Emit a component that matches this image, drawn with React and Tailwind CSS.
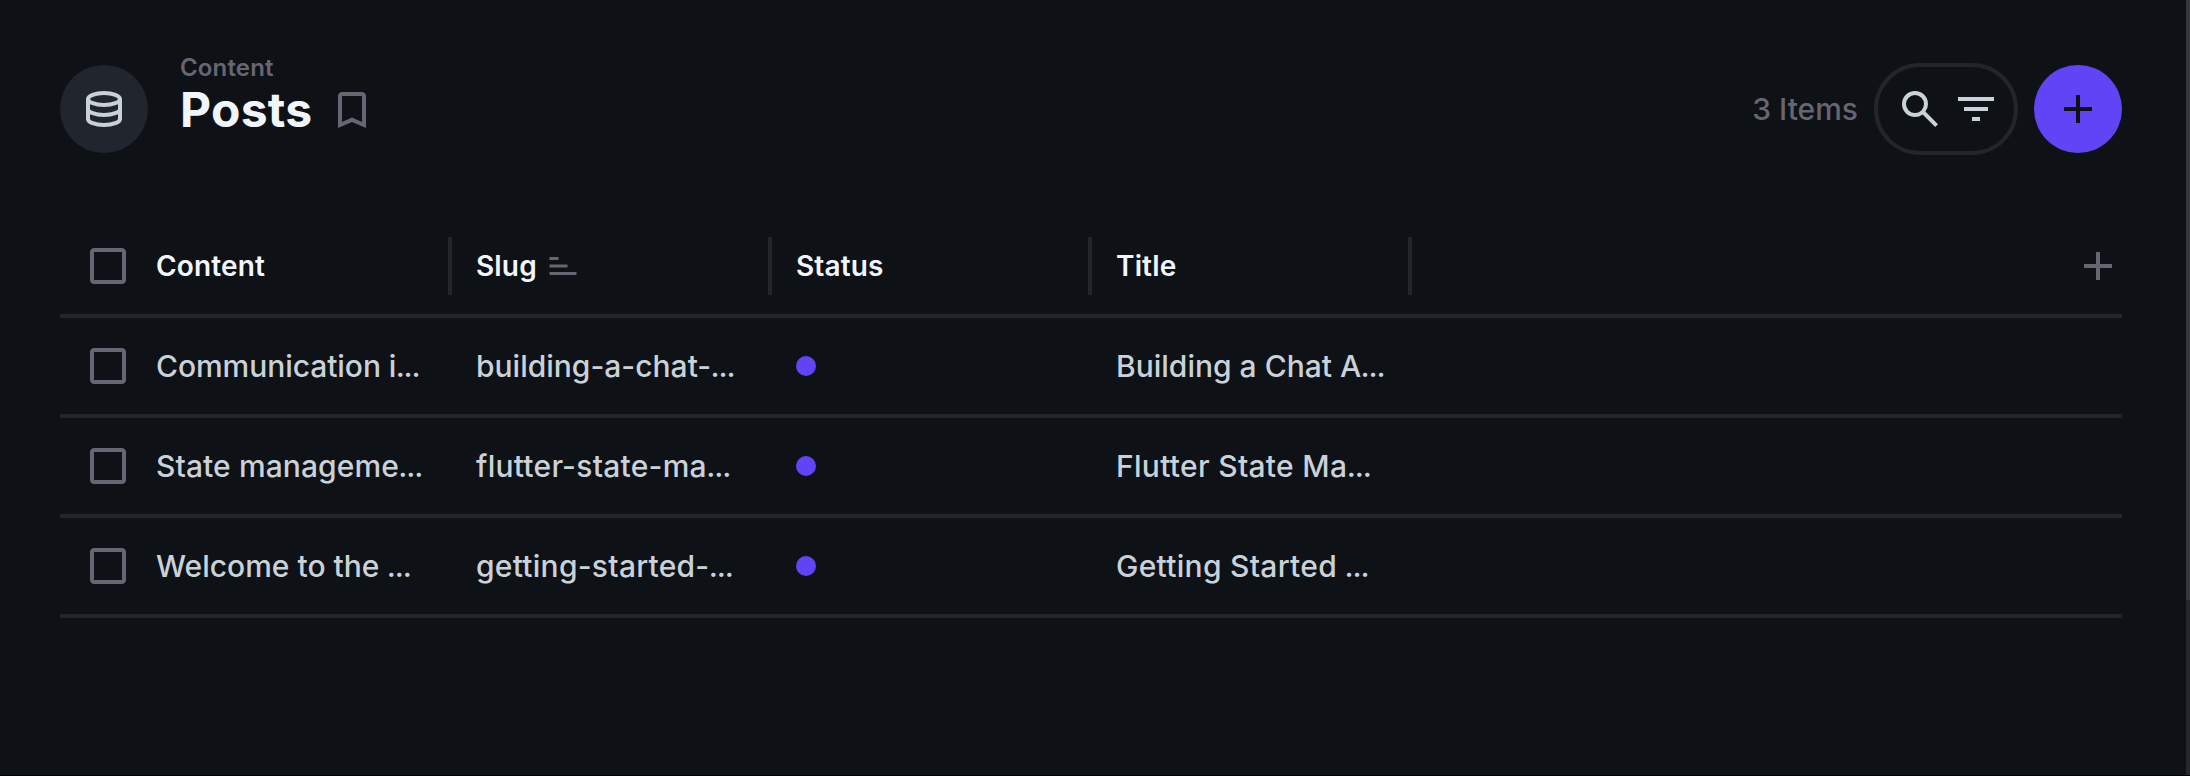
const columns = ["Content", "Slug", "Status", "Title"];

const rows = [
  {
    content: ["Communication i", "tracking-[-0.06px]"],
    slug: ["building-a-chat-", "tracking-normal"],
    title: ["Building a Chat A", "tracking-normal"],
  },
  {
    content: ["State manageme", "tracking-[0.1px]"],
    slug: ["flutter-state-ma", "tracking-[0.25px]"],
    title: ["Flutter State Ma", "tracking-[0.3px]"],
  },
  {
    content: ["Welcome to the ", "tracking-normal"],
    slug: ["getting-started-", "tracking-[0.25px]"],
    title: ["Getting Started ", "tracking-[0.28px]"],
  },
];

function Icon({ d, className = "size-12" }) {
  return (
    <svg viewBox="0 0 24 24" fill="currentColor" className={`shrink-0 ${className}`}>
      <path d={d} />
    </svg>
  );
}

const SEARCH =
  "m19.6 21-6.3-6.3A6.1 6.1 0 0 1 9.5 16q-2.725 0-4.612-1.888T3 9.5q0-2.725 1.888-4.612T9.5 3t4.613 1.888T16 9.5a6.1 6.1 0 0 1-1.3 3.8l6.3 6.3zM9.5 14q1.875 0 3.188-1.312T14 9.5t-1.312-3.187T9.5 5 6.313 6.313 5 9.5t1.313 3.188T9.5 14";
const FILTER = "M10 18v-2h4v2zm-4-5v-2h12v2zM3 8V6h18v2z";
const PLUS = "M11 19v-6H5v-2h6V5h2v6h6v2h-6v6z";
const BOOKMARK =
  "M5 21V5q0-.825.588-1.412T7 3h10q.825 0 1.413.588T19 5v16l-7-3zm2-3.05 5-2.15 5 2.15V5H7z";
const SORT = "M3 8V6h6v2zm0 5v-2h12v2zm0 5v-2h18v2z";
const CHECKBOX =
  "M5 21q-.825 0-1.412-.587T3 19V5q0-.825.588-1.412T5 3h14q.825 0 1.413.588T21 5v14q0 .825-.587 1.413T19 21zm0-2h14V5H5z";

function DatabaseIcon() {
  return (
    <svg viewBox="0 0 24 24" fill="none" stroke="currentColor" strokeWidth="2" className="size-12">
      <ellipse cx="12" cy="7" rx="8" ry="3" />
      <path d="M4 7v10c0 1.66 3.58 3 8 3s8-1.34 8-3V7" />
      <path d="M4 12c0 1.66 3.58 3 8 3s8-1.34 8-3" />
    </svg>
  );
}

function Header() {
  return (
    <header className="flex h-[88px] items-center">
      <div className="flex size-[88px] items-center justify-center rounded-full bg-[#21262e] text-[#c9d1d9]">
        <DatabaseIcon />
      </div>
      <div className="ml-8 flex flex-col pb-[17px]">
        <div className="-mt-[10px] text-[24px] leading-[29px] font-semibold tracking-[0.15px] text-[#666672]">Content</div>
        <div className="flex items-center">
          <h1 className="text-[48px] leading-[56px] font-bold tracking-[0.25px] text-[#f0f6fc]">Posts</h1>
          <Icon d={BOOKMARK} className="ml-4 size-12 text-[#666672]" />
        </div>
      </div>
      <div className="ml-auto flex items-center">
        <span className="text-[30px] leading-[44px] font-medium text-[#666672]">3 Items</span>
        <div className="ml-4 flex h-[92px] w-[144px] items-center gap-2 rounded-full border-4 border-[#22252b] pl-[18px] text-[#c9d1d9]">
          <Icon d={SEARCH} />
          <Icon d={FILTER} />
        </div>
        <button className="ml-4 flex size-[88px] items-center justify-center rounded-full bg-[#6144f5] text-[#0e1116]">
          <Icon d={PLUS} />
        </button>
      </div>
    </header>
  );
}

function CheckCell() {
  return (
    <div className="flex w-24 shrink-0 pl-6 text-[#666672]">
      <Icon d={CHECKBOX} />
    </div>
  );
}

function TextCell({ value: [text, tracking] }) {
  return (
    <div className="w-80 whitespace-pre">
      <span className={tracking}>{text}</span>
      <span className="-ml-[0.7px] tracking-[-1.1px]">...</span>
    </div>
  );
}

export default function App() {
  return (
    <div className="flex h-[776px] w-[2190px] overflow-hidden border-b border-black bg-[#0e1116] font-[Inter,sans-serif]">
      <main className="w-[2186px] pt-[65px] pr-16 pl-[60px]">
        <Header />
        <section className="mt-[65px]">
          <div className="flex h-[100px] items-center border-b-4 border-[#22252b]">
            <CheckCell />
            {columns.map((name) => (
              <div key={name} className="flex h-[58px] w-80 items-center">
                <div className="flex w-[292px] items-center text-[28px] font-semibold tracking-[0.15px] text-[#f0f6fc]">
                  {name}
                  {name === "Slug" && <Icon d={SORT} className="ml-2 size-9 text-[#666672]" />}
                </div>
                <div className="h-full w-1 bg-[#22252b]" />
              </div>
            ))}
            <Icon d={PLUS} className="ml-auto size-12 text-[#666672]" />
          </div>
          {rows.map((row) => (
            <div
              key={row.slug[0]}
              className="flex h-[100px] items-center border-b-4 border-[#22252b] text-[30px] font-medium text-[#c9d1d9]"
            >
              <CheckCell />
              <TextCell value={row.content} />
              <TextCell value={row.slug} />
              <div className="w-80">
                <div className="size-5 rounded-full bg-[#6144f5]" />
              </div>
              <TextCell value={row.title} />
            </div>
          ))}
        </section>
      </main>
      <div className="h-full w-1 bg-[#24262b]">
        <div className="h-[600px] bg-[#34373d]" />
      </div>
    </div>
  );
}
